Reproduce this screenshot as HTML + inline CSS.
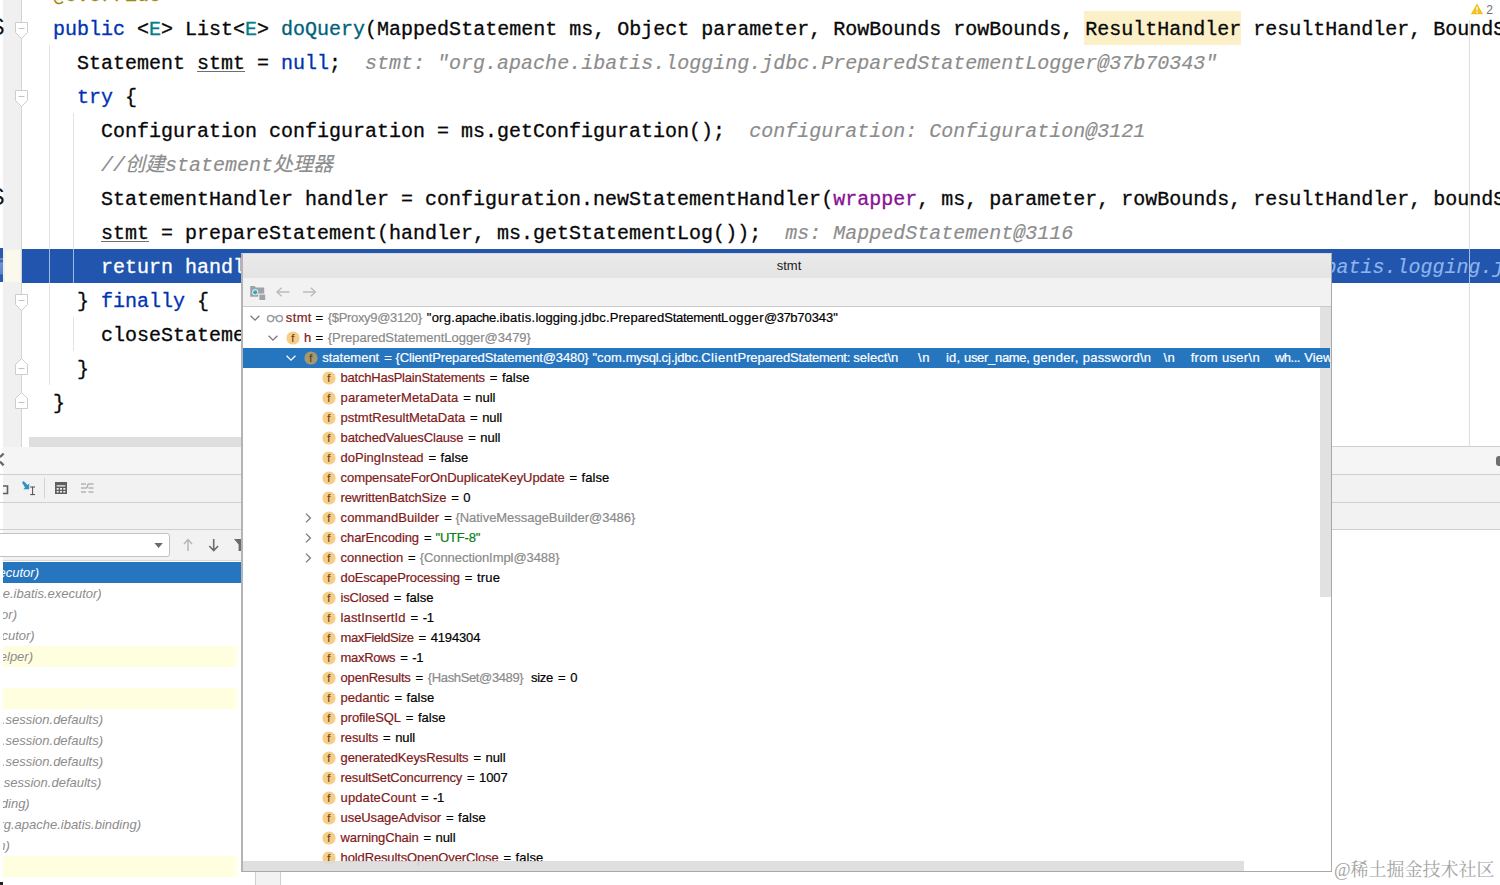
<!DOCTYPE html>
<html lang="zh"><head><meta charset="utf-8"><title>stmt</title>
<style>
html,body{margin:0;padding:0;background:#fff;width:1500px;height:885px}
#root{position:relative;width:1500px;height:885px;overflow:hidden;background:#fff;font-family:"Liberation Sans","Noto Sans CJK SC",sans-serif;font-size:13px;color:#000}
#root div,#root span,#root svg{box-sizing:border-box}
.abs{position:absolute}
/* ---------- editor ---------- */
#editor{position:absolute;left:0;top:0;width:1500px;height:447px;overflow:hidden;background:#fff}
#gutter{position:absolute;left:3px;top:0;width:18px;height:447px;background:#f0f0f0}
#gline{position:absolute;left:21px;top:0;width:1px;height:447px;background:#d4d4d4}
#margin{position:absolute;left:1469px;top:20px;width:1px;height:427px;background:#dedede}
.guide{position:absolute;width:1px;background:#e3e3e3}
#exec{position:absolute;left:22px;top:249px;width:1478px;height:34px;background:#2255ad}
#exec0{position:absolute;left:0;top:248px;width:3px;height:34px;background:linear-gradient(#2a59ae 0,#2a59ae 28%,#7f9fd8 32%,#2a59ae 38%,#6f93d3 45%,#5d84cb 75%,#2a59ae 80%)}
#gexec{position:absolute;left:5px;top:250px;width:15px;height:32px;background:#fbf9ec}
.ln{position:absolute;left:53px;height:34px;line-height:34px;white-space:pre;font-family:"Liberation Mono","Noto Sans CJK SC",monospace;font-size:20px;color:#080808;letter-spacing:0;-webkit-text-stroke:0.3px currentColor}
.kw{color:#0033b3}.tp{color:#007e8a}.md{color:#00627a}.fld{color:#871094}.an{color:#9e880d}
.cm{color:#8c8c8c;font-style:italic;-webkit-text-stroke:0.15px currentColor}
.hint{color:#8c8c8c;font-style:italic;-webkit-text-stroke:0.15px currentColor}
.u{text-decoration:underline;text-decoration-thickness:1px;text-underline-offset:2px;text-decoration-color:#6e6e6e}
.warn{background:#fbf0c8;display:inline-block;height:34px;vertical-align:top}
#hscroll{position:absolute;left:29px;top:437px;width:1290px;height:10px;background:#dedede}
/* ---------- popup ---------- */
#popup{position:absolute;left:241px;top:253px;width:1091px;height:619px;background:#fff;border:1px solid #a8a8a8;border-top-color:#d9d9d9;border-left:2px solid #b4b4b4;overflow:hidden}
#ptitle{position:absolute;left:0;top:0;width:100%;height:24px;background:linear-gradient(#eaeaea,#e4e4e4);text-align:center;line-height:24px;font-size:13px;color:#1a1a1a;padding-left:4px}
#ptool{position:absolute;left:0;top:24px;width:100%;height:29px;background:#f2f2f2;border-bottom:1px solid #cbcbcb}
.row{position:absolute;left:0;width:1087px;height:20px;line-height:20px;white-space:pre;font-size:13px}
.sel{background:#2675bf;overflow:hidden}
.seg{position:absolute;top:0;height:20px;line-height:20px;white-space:pre;-webkit-text-stroke:0.2px currentColor}
.n{color:#7f1a1a}.t{color:#8a8a8a}.s{color:#0a7d17}.v{color:#000}
.sel .seg{color:#fff}
.ic{position:absolute;overflow:visible}
#vscroll{position:absolute;left:1077px;top:53px;width:11px;height:290px;background:#e1e1e1}
#hs2{position:absolute;left:0;top:607px;width:1001px;height:11px;background:rgba(220,220,220,.9)}
/* ---------- bottom panels ---------- */
.strip{position:absolute;background:#f3f3f3}
.hl{position:absolute;height:1px;background:#cfcfcf}
#frames{position:absolute;left:3px;top:561px;width:238px;height:324px;background:#fff;overflow:hidden}
.fr{position:absolute;left:0;width:238px;height:21px}
.fr span{position:absolute;top:0;height:21px;line-height:21px;white-space:pre;font-style:italic;font-size:13px;color:#8c8c8c}
.fy{background:linear-gradient(90deg,#ffffe0 0,#ffffe0 230px,#fff 238px)}
.fs{background:#2675bf}
.fs span{color:#fff}
#combo{position:absolute;left:-6px;top:533px;width:176px;height:24px;background:#fff;border:1px solid #c2c2c2;border-radius:3px}
#wm{position:absolute;left:1334px;top:856.5px;height:26px;line-height:26px;font-size:18px;color:#a4a4a4;white-space:pre;font-family:"Liberation Serif","Noto Serif CJK SC",serif;font-weight:400}
</style></head>
<body><div id="root">
<div id="editor">
<div id="gutter"></div><div id="gline"></div>
<div id="exec"></div><div id="exec0"></div><div id="gexec"></div>
<div class="guide" style="left:49px;top:45px;height:340px"></div>
<div class="guide" style="left:73px;top:113px;height:170px"></div>
<div class="guide" style="left:73px;top:317px;height:34px"></div>
<div class="guide" style="left:49px;top:249px;height:34px;background:#9db8e6"></div>
<div class="guide" style="left:73px;top:249px;height:34px;background:#9db8e6"></div>
<div id="margin"></div>
<div class="guide" style="left:1469px;top:249px;height:34px;background:#a9c0e8"></div>
<div class="ln" style="left:53px;top:-21px;"><span class="an">@Override</span></div>
<div class="ln" style="left:53px;top:13px;"><span class="kw">public</span> &lt;<span class="tp">E</span>&gt; List&lt;<span class="tp">E</span>&gt; <span class="md">doQuery</span>(MappedStatement ms, Object parameter, RowBounds rowBounds, <span class="warn" style="margin-top:-2px;padding-top:2px;margin-left:-1px;padding-left:1px">ResultHandler</span> resultHandler, BoundSql boundSql) <span class="kw">throws</span> SQLException {</div>
<div class="ln" style="left:53px;top:47px;">  Statement <span class="u">stmt</span> = <span class="kw">null</span>;  <span class="hint">stmt: "org.apache.ibatis.logging.jdbc.PreparedStatementLogger@37b70343"</span></div>
<div class="ln" style="left:53px;top:81px;">  <span class="kw">try</span> {</div>
<div class="ln" style="left:53px;top:115px;">    Configuration configuration = ms.getConfiguration();  <span class="hint">configuration: Configuration@3121</span></div>
<div class="ln" style="left:53px;top:149px;">    <span class="cm">//创建statement处理器</span></div>
<div class="ln" style="left:53px;top:183px;">    StatementHandler handler = configuration.newStatementHandler(<span class="fld">wrapper</span>, ms, parameter, rowBounds, resultHandler, boundSql);</div>
<div class="ln" style="left:53px;top:217px;">    <span class="u">stmt</span> = prepareStatement(handler, ms.getStatementLog());  <span class="hint">ms: MappedStatement@3116</span></div>
<div class="ln" style="left:53px;top:251px;color:#fff">    return handler.query(stmt, resultHandler);</div>
<div class="ln" style="left:1096.5px;top:251px;"><span class="hint" style="color:#8db4ee">stmt: "org.apache.ibatis.logging.jdbc.PreparedStatementLogger@37b70343"</span></div>
<div class="ln" style="left:53px;top:285px;">  } <span class="kw">finally</span> {</div>
<div class="ln" style="left:53px;top:319px;">    closeStatement(<span class="u">stmt</span>);</div>
<div class="ln" style="left:53px;top:353px;">  }</div>
<div class="ln" style="left:53px;top:387px;">}</div>
<svg class="ic" style="left:15px;top:21.9px" width="13" height="17" viewBox="0 0 13 17"><path d="M0.5,0.5 H12.5 V10.5 L6.5,16.5 L0.5,10.5 Z" fill="#fff" stroke="#cdcdcd" stroke-width="1"/><path d="M3.5,6.5 H9.5" stroke="#c2c2c2" stroke-width="1" fill="none"/></svg>
<svg class="ic" style="left:15px;top:89.9px" width="13" height="17" viewBox="0 0 13 17"><path d="M0.5,0.5 H12.5 V10.5 L6.5,16.5 L0.5,10.5 Z" fill="#fff" stroke="#cdcdcd" stroke-width="1"/><path d="M3.5,6.5 H9.5" stroke="#c2c2c2" stroke-width="1" fill="none"/></svg>
<svg class="ic" style="left:15px;top:293.9px" width="13" height="17" viewBox="0 0 13 17"><path d="M0.5,0.5 H12.5 V10.5 L6.5,16.5 L0.5,10.5 Z" fill="#fff" stroke="#cdcdcd" stroke-width="1"/><path d="M3.5,6.5 H9.5" stroke="#c2c2c2" stroke-width="1" fill="none"/></svg>
<svg class="ic" style="left:15px;top:358.3px" width="13" height="17" viewBox="0 0 13 17"><path d="M0.5,16.5 H12.5 V6.5 L6.5,0.5 L0.5,6.5 Z" fill="#fff" stroke="#cdcdcd" stroke-width="1"/><path d="M3.5,10.5 H9.5" stroke="#c2c2c2" stroke-width="1" fill="none"/></svg>
<svg class="ic" style="left:15px;top:392.1px" width="13" height="17" viewBox="0 0 13 17"><path d="M0.5,16.5 H12.5 V6.5 L6.5,0.5 L0.5,6.5 Z" fill="#fff" stroke="#cdcdcd" stroke-width="1"/><path d="M3.5,10.5 H9.5" stroke="#c2c2c2" stroke-width="1" fill="none"/></svg>
<svg class="ic" style="left:1470px;top:3px" width="14" height="12" viewBox="0 0 14 12"><path d="M7,0.6 L13.2,11.2 H0.8 Z" fill="#f2c21c"/><path d="M6.3,4 h1.4 v3.6 h-1.4 z M6.3,8.6 h1.4 v1.4 h-1.4 z" fill="#fff"/></svg>
<div class="abs" style="left:1486.3px;top:2px;height:16px;line-height:16px;font-size:12px;color:#6e6e6e">2</div>
<div id="hscroll"></div>
<div class="abs" style="left:-10.8px;top:10px;height:34px;line-height:34px;font-size:23px;font-family:'Liberation Sans',sans-serif;color:#111;white-space:pre">S</div>
<div class="abs" style="left:-10.8px;top:180px;height:34px;line-height:34px;font-size:23px;font-family:'Liberation Sans',sans-serif;color:#111;white-space:pre">S</div>
</div>
<div class="strip" style="left:3px;top:447px;width:1497px;height:27px;background:#f5f5f5"></div>
<div class="strip" style="left:3px;top:474px;width:1497px;height:56px;background:#f2f2f2"></div>
<div class="strip" style="left:3px;top:530px;width:240px;height:31px;background:#f2f2f2"></div>
<div class="hl" style="left:1332px;top:446px;width:168px"></div>
<div class="hl" style="left:0;top:474px;width:1500px"></div>
<div class="hl" style="left:0;top:502px;width:1500px"></div>
<div class="hl" style="left:0;top:529px;width:1500px"></div>
<div class="hl" style="left:3px;top:560px;width:240px;background:#dadada"></div>
<svg class="ic" style="left:0;top:452px" width="4" height="16" viewBox="0 0 4 16"><path d="M3.6,1.5 L0,5.2 M0,9.6 L3.6,13.4" fill="none" stroke="#6a6a6a" stroke-width="2.4"/></svg>
<svg class="ic" style="left:0;top:478px" width="100" height="22" viewBox="0 0 100 22"><path d="M3,8 H7.5 V15.5 H3" fill="none" stroke="#5f5f5f" stroke-width="1.6"/><path d="M22,4.5 L23.6,3 L27.6,7 L29.2,5.4 V11.2 H23.4 L25,9.6 Z" fill="#3592c4"/><path d="M30.2,9 H35 M30.2,16.6 H35 M32.6,9 V16.6" fill="none" stroke="#4d4d4d" stroke-width="1"/><path d="M44.5,0 V20" stroke="#d3d3d3" stroke-width="1"/><path d="M55,4 H67 V16 H55 Z M56.7,7.3 V8.6 H65.3 V7.3 Z M56.7,10 v1.7 h2 v-1.7 z M60,10 v1.7 h2 v-1.7 z M63.3,10 v1.7 h2 v-1.7 z M56.7,12.9 v1.7 h2 v-1.7 z M60,12.9 v1.7 h2 v-1.7 z M63.3,12.9 v1.7 h2 v-1.7 z" fill="#5f5f5f" fill-rule="evenodd"/><path d="M81,6 H86 M81,10 H86 M81,14 H86 M88.5,6 H93.5 M88.5,10 H93.5 M88.5,14 H93.5 M86,10 Q87.5,10 87.5,8 Q87.5,6 88.5,6" fill="none" stroke="#b4b4b4" stroke-width="1.5"/></svg>
<div id="combo"></div>
<svg class="ic" style="left:150px;top:536px" width="92" height="18" viewBox="0 0 92 18"><path d="M4.4,7 H12.8 L8.6,12 Z" fill="#6b6b6b"/><path d="M38,15 V4 M34,8 L38,3.6 L42,8" fill="none" stroke="#b6b6b6" stroke-width="1.5"/><path d="M63.7,3 V14.4 M59.3,10 L63.7,14.6 L68.1,10" fill="none" stroke="#6b6b6b" stroke-width="1.6"/><path d="M84,3 H92 V15 H88.6 V8.4 Z" fill="#6b6b6b"/></svg>
<div class="abs" style="left:1496px;top:456px;width:8px;height:10px;border-radius:3px;background:#6e6e6e"></div>
<div id="frames">
<div class="fr fs" style="top:0.5px"><span style="right:202.0px">xecutor)</span></div>
<div class="fr" style="top:21.5px"><span style="right:139.3px">he.ibatis.executor)</span></div>
<div class="fr" style="top:42.5px"><span style="right:224.0px">tor)</span></div>
<div class="fr" style="top:63.5px"><span style="right:206.3px">ecutor)</span></div>
<div class="fr fy" style="top:84.5px"><span style="right:208.0px">Helper)</span></div>
<div class="fr fy" style="top:126.5px"></div>
<div class="fr" style="top:147.5px"><span style="right:138.0px">s.session.defaults)</span></div>
<div class="fr" style="top:168.5px"><span style="right:138.0px">s.session.defaults)</span></div>
<div class="fr" style="top:189.5px"><span style="right:138.0px">s.session.defaults)</span></div>
<div class="fr" style="top:210.5px"><span style="right:139.7px">s.session.defaults)</span></div>
<div class="fr" style="top:231.5px"><span style="right:211.3px">nding)</span></div>
<div class="fr" style="top:252.5px"><span style="right:100.0px">rg.apache.ibatis.binding)</span></div>
<div class="fr" style="top:273.5px"><span style="right:231.2px">in)</span></div>
<div class="fr fy" style="top:294.5px"></div>
</div>
<div class="abs" style="left:0;top:882px;width:3px;height:3px;background:#222"></div>
<div class="abs" style="left:255px;top:872px;width:26px;height:14px;background:#f2f2f2;border-left:1px solid #cfcfcf;border-right:1px solid #cfcfcf"></div>
<div id="popup">
<div id="ptitle">stmt</div>
<div id="ptool"><svg class="ic" style="left:7px;top:7px" width="70" height="16" viewBox="0 0 70 16"><path d="M0.2,1 H4.6 L6,2.6 H14.2 V11.8 H0.2 Z" fill="#9ea3a8"/><circle cx="5.2" cy="7.3" r="3" fill="#e9f6f8"/><circle cx="5.2" cy="7.3" r="2.1" fill="#2fa9c0"/><rect x="8.2" y="8.6" width="7.4" height="7" fill="#f2f2f2"/><rect x="9.4" y="9.6" width="5.8" height="5.4" fill="#9ea3a8"/><path d="M39.4,7 H27.4 M31.6,2.8 L27,7 L31.6,11.2" fill="none" stroke="#bcbcbc" stroke-width="1.4"/><path d="M53,7 H65 M60.8,2.8 L65.4,7 L60.8,11.2" fill="none" stroke="#bcbcbc" stroke-width="1.4"/></svg></div>
<div id="vscroll"></div>
<div class="row" style="top:54px"><span class="seg n" style="left:42.8px;letter-spacing:0.359px;">stmt</span><span class="seg v" style="left:72.5px;">=</span><span class="seg t" style="left:84.8px;letter-spacing:-0.329px;">{$Proxy9@3120}</span><span class="seg v" style="left:183.8px;letter-spacing:0.237px;">"org.</span><span class="seg v" style="left:212.0px;letter-spacing:-0.267px;">apache.</span><span class="seg v" style="left:256.4px;letter-spacing:0.290px;">ibatis.</span><span class="seg v" style="left:292.4px;letter-spacing:0.019px;">logging.</span><span class="seg v" style="left:338.1px;letter-spacing:0.246px;">jdbc.</span><span class="seg v" style="left:366.8px;letter-spacing:0.127px;">Prepared</span><span class="seg v" style="left:421.3px;letter-spacing:-0.285px;">Statement</span><span class="seg v" style="left:478.0px;letter-spacing:0.419px;">Logger</span><span class="seg v" style="left:521.0px;letter-spacing:-0.491px;">@37</span><span class="seg v" style="left:547.2px;letter-spacing:-0.071px;">b70343"</span></div>
<div class="row" style="top:74px"><span class="seg n" style="left:61.0px;">h</span><span class="seg v" style="left:72.5px;">=</span><span class="seg t" style="left:84.8px;letter-spacing:-0.031px;">{PreparedStatementLogger@3479}</span></div>
<div class="row sel" style="top:94px"><span class="seg n" style="left:79.3px;letter-spacing:-0.022px;">statement</span><span class="seg v" style="left:141.3px;">=</span><span class="seg t" style="left:152.5px;letter-spacing:-0.126px;">{ClientPreparedStatement@3480}</span><span class="seg v" style="left:349.4px;letter-spacing:0.101px;">"com.</span><span class="seg v" style="left:382.7px;letter-spacing:-0.277px;">mysql.</span><span class="seg v" style="left:418.6px;letter-spacing:-0.033px;">cj.</span><span class="seg v" style="left:431.5px;letter-spacing:-0.154px;">jdbc.</span><span class="seg v" style="left:458.2px;letter-spacing:0.525px;">Client</span><span class="seg v" style="left:494.6px;letter-spacing:-0.123px;">Prepared</span><span class="seg v" style="left:547.1px;letter-spacing:-0.299px;">Statement: </span><span class="seg v" style="left:610.3px;letter-spacing:0.023px;">select\n</span><span class="seg v" style="left:675.0px;letter-spacing:0.578px;">\n</span><span class="seg v" style="left:703.1px;letter-spacing:0.139px;">id, </span><span class="seg v" style="left:721.0px;letter-spacing:-0.306px;">user_name, </span><span class="seg v" style="left:789.9px;letter-spacing:0.362px;">gender, </span><span class="seg v" style="left:839.8px;letter-spacing:0.202px;">password\n</span><span class="seg v" style="left:920.5px;letter-spacing:0.478px;">\n</span><span class="seg v" style="left:947.7px;letter-spacing:0.323px;">from user\n</span><span class="seg v" style="left:1032.0px;letter-spacing:-0.534px;">wh...</span><span class="seg v" style="left:1061.3px;letter-spacing:0.062px;">View</span></div>
<div class="row" style="top:114px"><span class="seg n" style="left:97.6px;letter-spacing:-0.230px;">batchHasPlainStatements</span><span class="seg v" style="left:246.8px;">=</span><span class="seg v" style="left:258.9px;letter-spacing:0.026px;">false</span></div>
<div class="row" style="top:134px"><span class="seg n" style="left:97.6px;letter-spacing:0.122px;">parameterMetaData</span><span class="seg v" style="left:220.2px;">=</span><span class="seg v" style="left:232.3px;letter-spacing:-0.062px;">null</span></div>
<div class="row" style="top:154px"><span class="seg n" style="left:97.6px;letter-spacing:-0.021px;">pstmtResultMetaData</span><span class="seg v" style="left:227.1px;">=</span><span class="seg v" style="left:239.2px;letter-spacing:-0.062px;">null</span></div>
<div class="row" style="top:174px"><span class="seg n" style="left:97.6px;letter-spacing:-0.148px;">batchedValuesClause</span><span class="seg v" style="left:225.2px;">=</span><span class="seg v" style="left:237.3px;letter-spacing:-0.062px;">null</span></div>
<div class="row" style="top:194px"><span class="seg n" style="left:97.6px;letter-spacing:-0.010px;">doPingInstead</span><span class="seg v" style="left:185.5px;">=</span><span class="seg v" style="left:197.6px;letter-spacing:0.026px;">false</span></div>
<div class="row" style="top:214px"><span class="seg n" style="left:97.6px;letter-spacing:-0.066px;">compensateForOnDuplicateKeyUpdate</span><span class="seg v" style="left:326.5px;">=</span><span class="seg v" style="left:338.6px;letter-spacing:0.026px;">false</span></div>
<div class="row" style="top:234px"><span class="seg n" style="left:97.6px;letter-spacing:-0.149px;">rewrittenBatchSize</span><span class="seg v" style="left:208.2px;">=</span><span class="seg v" style="left:220.3px;letter-spacing:0.066px;">0</span></div>
<div class="row" style="top:254px"><span class="seg n" style="left:97.6px;letter-spacing:0.082px;">commandBuilder</span><span class="seg v" style="left:201.2px;">=</span><span class="seg t" style="left:212.4px;letter-spacing:-0.036px;">{NativeMessageBuilder@3486}</span></div>
<div class="row" style="top:274px"><span class="seg n" style="left:97.6px;letter-spacing:-0.092px;">charEncoding</span><span class="seg v" style="left:180.9px;">=</span><span class="seg s" style="left:192.5px;letter-spacing:-0.195px;">"UTF-8"</span></div>
<div class="row" style="top:294px"><span class="seg n" style="left:97.6px;letter-spacing:-0.029px;">connection</span><span class="seg v" style="left:165.1px;">=</span><span class="seg t" style="left:176.7px;letter-spacing:-0.064px;">{ConnectionImpl@3488}</span></div>
<div class="row" style="top:314px"><span class="seg n" style="left:97.6px;letter-spacing:-0.158px;">doEscapeProcessing</span><span class="seg v" style="left:221.8px;">=</span><span class="seg v" style="left:233.9px;letter-spacing:0.198px;">true</span></div>
<div class="row" style="top:334px"><span class="seg n" style="left:97.6px;letter-spacing:-0.195px;">isClosed</span><span class="seg v" style="left:150.8px;">=</span><span class="seg v" style="left:162.9px;letter-spacing:0.026px;">false</span></div>
<div class="row" style="top:354px"><span class="seg n" style="left:97.6px;letter-spacing:0.126px;">lastInsertId</span><span class="seg v" style="left:167.6px;">=</span><span class="seg v" style="left:179.7px;letter-spacing:-0.381px;">-1</span></div>
<div class="row" style="top:374px"><span class="seg n" style="left:97.6px;letter-spacing:-0.411px;">maxFieldSize</span><span class="seg v" style="left:175.6px;">=</span><span class="seg v" style="left:187.7px;letter-spacing:-0.146px;">4194304</span></div>
<div class="row" style="top:394px"><span class="seg n" style="left:97.6px;letter-spacing:-0.340px;">maxRows</span><span class="seg v" style="left:157.2px;">=</span><span class="seg v" style="left:169.3px;letter-spacing:-0.381px;">-1</span></div>
<div class="row" style="top:414px"><span class="seg n" style="left:97.6px;letter-spacing:-0.207px;">openResults</span><span class="seg v" style="left:172.5px;">=</span><span class="seg t" style="left:184.8px;letter-spacing:-0.369px;">{HashSet@3489}</span><span class="seg v" style="left:288.0px;letter-spacing:-0.281px;">size</span><span class="seg v" style="left:314.9px;">=</span><span class="seg v" style="left:327.2px;letter-spacing:0.066px;">0</span></div>
<div class="row" style="top:434px"><span class="seg n" style="left:97.6px;letter-spacing:-0.020px;">pedantic</span><span class="seg v" style="left:151.5px;">=</span><span class="seg v" style="left:163.6px;letter-spacing:0.026px;">false</span></div>
<div class="row" style="top:454px"><span class="seg n" style="left:97.6px;letter-spacing:-0.112px;">profileSQL</span><span class="seg v" style="left:162.8px;">=</span><span class="seg v" style="left:174.9px;letter-spacing:0.026px;">false</span></div>
<div class="row" style="top:474px"><span class="seg n" style="left:97.6px;letter-spacing:-0.100px;">results</span><span class="seg v" style="left:140.1px;">=</span><span class="seg v" style="left:152.2px;letter-spacing:-0.062px;">null</span></div>
<div class="row" style="top:494px"><span class="seg n" style="left:97.6px;letter-spacing:-0.146px;">generatedKeysResults</span><span class="seg v" style="left:230.4px;">=</span><span class="seg v" style="left:242.5px;letter-spacing:-0.062px;">null</span></div>
<div class="row" style="top:514px"><span class="seg n" style="left:97.6px;letter-spacing:-0.175px;">resultSetConcurrency</span><span class="seg v" style="left:224.0px;">=</span><span class="seg v" style="left:236.1px;letter-spacing:-0.130px;">1007</span></div>
<div class="row" style="top:534px"><span class="seg n" style="left:97.6px;letter-spacing:0.095px;">updateCount</span><span class="seg v" style="left:178.0px;">=</span><span class="seg v" style="left:190.1px;letter-spacing:-0.381px;">-1</span></div>
<div class="row" style="top:554px"><span class="seg n" style="left:97.6px;letter-spacing:-0.093px;">useUsageAdvisor</span><span class="seg v" style="left:203.0px;">=</span><span class="seg v" style="left:215.1px;letter-spacing:0.026px;">false</span></div>
<div class="row" style="top:574px"><span class="seg n" style="left:97.6px;letter-spacing:-0.133px;">warningChain</span><span class="seg v" style="left:180.4px;">=</span><span class="seg v" style="left:192.5px;letter-spacing:-0.062px;">null</span></div>
<div class="row" style="top:594px"><span class="seg n" style="left:97.6px;letter-spacing:-0.131px;">holdResultsOpenOverClose</span><span class="seg v" style="left:260.5px;">=</span><span class="seg v" style="left:272.6px;letter-spacing:0.026px;">false</span></div>
<svg class="ic" style="left:5.5px;top:59.0px" width="12" height="10" viewBox="0 0 12 10"><path d="M1.6,2.8 L6,7.2 L10.4,2.8" fill="none" stroke="#7a7a7a" stroke-width="1.3"/></svg>
<svg class="ic" style="left:23.0px;top:58.6px" width="18" height="10" viewBox="0 0 18 10"><circle cx="4.6" cy="5.6" r="3.1" fill="none" stroke="#9aa0a6" stroke-width="1.5"/><circle cx="13.4" cy="5.6" r="3.1" fill="none" stroke="#9aa0a6" stroke-width="1.5"/><path d="M7.4,4.6 Q9,3.4 10.6,4.6" fill="none" stroke="#9aa0a6" stroke-width="1.3"/></svg>
<svg class="ic" style="left:23.5px;top:79.0px" width="12" height="10" viewBox="0 0 12 10"><path d="M1.6,2.8 L6,7.2 L10.4,2.8" fill="none" stroke="#7a7a7a" stroke-width="1.3"/></svg>
<svg class="ic" style="left:42.8px;top:77.0px" width="14" height="14" viewBox="0 0 14 14"><circle cx="7" cy="7" r="6.6" fill="#f4af3d" fill-opacity=".62"/><text x="5.65" y="11.3" text-anchor="middle" transform="scale(1.22,1)" font-family="Liberation Sans, sans-serif" font-size="10.5" fill="#4a3508" fill-opacity=".9">f</text></svg>
<svg class="ic" style="left:41.5px;top:99.0px" width="12" height="10" viewBox="0 0 12 10"><path d="M1.6,2.8 L6,7.2 L10.4,2.8" fill="none" stroke="#fff" stroke-width="1.3"/></svg>
<svg class="ic" style="left:60.8px;top:97.0px" width="14" height="14" viewBox="0 0 14 14"><circle cx="7" cy="7" r="6.6" fill="#f4af3d" fill-opacity=".62"/><text x="5.65" y="11.3" text-anchor="middle" transform="scale(1.22,1)" font-family="Liberation Sans, sans-serif" font-size="10.5" fill="#4a3508" fill-opacity=".9">f</text></svg>
<svg class="ic" style="left:79.2px;top:117.0px" width="14" height="14" viewBox="0 0 14 14"><circle cx="7" cy="7" r="6.6" fill="#f4af3d" fill-opacity=".62"/><text x="5.65" y="11.3" text-anchor="middle" transform="scale(1.22,1)" font-family="Liberation Sans, sans-serif" font-size="10.5" fill="#4a3508" fill-opacity=".9">f</text></svg>
<svg class="ic" style="left:79.2px;top:137.0px" width="14" height="14" viewBox="0 0 14 14"><circle cx="7" cy="7" r="6.6" fill="#f4af3d" fill-opacity=".62"/><text x="5.65" y="11.3" text-anchor="middle" transform="scale(1.22,1)" font-family="Liberation Sans, sans-serif" font-size="10.5" fill="#4a3508" fill-opacity=".9">f</text></svg>
<svg class="ic" style="left:79.2px;top:157.0px" width="14" height="14" viewBox="0 0 14 14"><circle cx="7" cy="7" r="6.6" fill="#f4af3d" fill-opacity=".62"/><text x="5.65" y="11.3" text-anchor="middle" transform="scale(1.22,1)" font-family="Liberation Sans, sans-serif" font-size="10.5" fill="#4a3508" fill-opacity=".9">f</text></svg>
<svg class="ic" style="left:79.2px;top:177.0px" width="14" height="14" viewBox="0 0 14 14"><circle cx="7" cy="7" r="6.6" fill="#f4af3d" fill-opacity=".62"/><text x="5.65" y="11.3" text-anchor="middle" transform="scale(1.22,1)" font-family="Liberation Sans, sans-serif" font-size="10.5" fill="#4a3508" fill-opacity=".9">f</text></svg>
<svg class="ic" style="left:79.2px;top:197.0px" width="14" height="14" viewBox="0 0 14 14"><circle cx="7" cy="7" r="6.6" fill="#f4af3d" fill-opacity=".62"/><text x="5.65" y="11.3" text-anchor="middle" transform="scale(1.22,1)" font-family="Liberation Sans, sans-serif" font-size="10.5" fill="#4a3508" fill-opacity=".9">f</text></svg>
<svg class="ic" style="left:79.2px;top:217.0px" width="14" height="14" viewBox="0 0 14 14"><circle cx="7" cy="7" r="6.6" fill="#f4af3d" fill-opacity=".62"/><text x="5.65" y="11.3" text-anchor="middle" transform="scale(1.22,1)" font-family="Liberation Sans, sans-serif" font-size="10.5" fill="#4a3508" fill-opacity=".9">f</text></svg>
<svg class="ic" style="left:79.2px;top:237.0px" width="14" height="14" viewBox="0 0 14 14"><circle cx="7" cy="7" r="6.6" fill="#f4af3d" fill-opacity=".62"/><text x="5.65" y="11.3" text-anchor="middle" transform="scale(1.22,1)" font-family="Liberation Sans, sans-serif" font-size="10.5" fill="#4a3508" fill-opacity=".9">f</text></svg>
<svg class="ic" style="left:79.2px;top:257.0px" width="14" height="14" viewBox="0 0 14 14"><circle cx="7" cy="7" r="6.6" fill="#f4af3d" fill-opacity=".62"/><text x="5.65" y="11.3" text-anchor="middle" transform="scale(1.22,1)" font-family="Liberation Sans, sans-serif" font-size="10.5" fill="#4a3508" fill-opacity=".9">f</text></svg>
<svg class="ic" style="left:79.2px;top:277.0px" width="14" height="14" viewBox="0 0 14 14"><circle cx="7" cy="7" r="6.6" fill="#f4af3d" fill-opacity=".62"/><text x="5.65" y="11.3" text-anchor="middle" transform="scale(1.22,1)" font-family="Liberation Sans, sans-serif" font-size="10.5" fill="#4a3508" fill-opacity=".9">f</text></svg>
<svg class="ic" style="left:79.2px;top:297.0px" width="14" height="14" viewBox="0 0 14 14"><circle cx="7" cy="7" r="6.6" fill="#f4af3d" fill-opacity=".62"/><text x="5.65" y="11.3" text-anchor="middle" transform="scale(1.22,1)" font-family="Liberation Sans, sans-serif" font-size="10.5" fill="#4a3508" fill-opacity=".9">f</text></svg>
<svg class="ic" style="left:79.2px;top:317.0px" width="14" height="14" viewBox="0 0 14 14"><circle cx="7" cy="7" r="6.6" fill="#f4af3d" fill-opacity=".62"/><text x="5.65" y="11.3" text-anchor="middle" transform="scale(1.22,1)" font-family="Liberation Sans, sans-serif" font-size="10.5" fill="#4a3508" fill-opacity=".9">f</text></svg>
<svg class="ic" style="left:79.2px;top:337.0px" width="14" height="14" viewBox="0 0 14 14"><circle cx="7" cy="7" r="6.6" fill="#f4af3d" fill-opacity=".62"/><text x="5.65" y="11.3" text-anchor="middle" transform="scale(1.22,1)" font-family="Liberation Sans, sans-serif" font-size="10.5" fill="#4a3508" fill-opacity=".9">f</text></svg>
<svg class="ic" style="left:79.2px;top:357.0px" width="14" height="14" viewBox="0 0 14 14"><circle cx="7" cy="7" r="6.6" fill="#f4af3d" fill-opacity=".62"/><text x="5.65" y="11.3" text-anchor="middle" transform="scale(1.22,1)" font-family="Liberation Sans, sans-serif" font-size="10.5" fill="#4a3508" fill-opacity=".9">f</text></svg>
<svg class="ic" style="left:79.2px;top:377.0px" width="14" height="14" viewBox="0 0 14 14"><circle cx="7" cy="7" r="6.6" fill="#f4af3d" fill-opacity=".62"/><text x="5.65" y="11.3" text-anchor="middle" transform="scale(1.22,1)" font-family="Liberation Sans, sans-serif" font-size="10.5" fill="#4a3508" fill-opacity=".9">f</text></svg>
<svg class="ic" style="left:79.2px;top:397.0px" width="14" height="14" viewBox="0 0 14 14"><circle cx="7" cy="7" r="6.6" fill="#f4af3d" fill-opacity=".62"/><text x="5.65" y="11.3" text-anchor="middle" transform="scale(1.22,1)" font-family="Liberation Sans, sans-serif" font-size="10.5" fill="#4a3508" fill-opacity=".9">f</text></svg>
<svg class="ic" style="left:79.2px;top:417.0px" width="14" height="14" viewBox="0 0 14 14"><circle cx="7" cy="7" r="6.6" fill="#f4af3d" fill-opacity=".62"/><text x="5.65" y="11.3" text-anchor="middle" transform="scale(1.22,1)" font-family="Liberation Sans, sans-serif" font-size="10.5" fill="#4a3508" fill-opacity=".9">f</text></svg>
<svg class="ic" style="left:79.2px;top:437.0px" width="14" height="14" viewBox="0 0 14 14"><circle cx="7" cy="7" r="6.6" fill="#f4af3d" fill-opacity=".62"/><text x="5.65" y="11.3" text-anchor="middle" transform="scale(1.22,1)" font-family="Liberation Sans, sans-serif" font-size="10.5" fill="#4a3508" fill-opacity=".9">f</text></svg>
<svg class="ic" style="left:79.2px;top:457.0px" width="14" height="14" viewBox="0 0 14 14"><circle cx="7" cy="7" r="6.6" fill="#f4af3d" fill-opacity=".62"/><text x="5.65" y="11.3" text-anchor="middle" transform="scale(1.22,1)" font-family="Liberation Sans, sans-serif" font-size="10.5" fill="#4a3508" fill-opacity=".9">f</text></svg>
<svg class="ic" style="left:79.2px;top:477.0px" width="14" height="14" viewBox="0 0 14 14"><circle cx="7" cy="7" r="6.6" fill="#f4af3d" fill-opacity=".62"/><text x="5.65" y="11.3" text-anchor="middle" transform="scale(1.22,1)" font-family="Liberation Sans, sans-serif" font-size="10.5" fill="#4a3508" fill-opacity=".9">f</text></svg>
<svg class="ic" style="left:79.2px;top:497.0px" width="14" height="14" viewBox="0 0 14 14"><circle cx="7" cy="7" r="6.6" fill="#f4af3d" fill-opacity=".62"/><text x="5.65" y="11.3" text-anchor="middle" transform="scale(1.22,1)" font-family="Liberation Sans, sans-serif" font-size="10.5" fill="#4a3508" fill-opacity=".9">f</text></svg>
<svg class="ic" style="left:79.2px;top:517.0px" width="14" height="14" viewBox="0 0 14 14"><circle cx="7" cy="7" r="6.6" fill="#f4af3d" fill-opacity=".62"/><text x="5.65" y="11.3" text-anchor="middle" transform="scale(1.22,1)" font-family="Liberation Sans, sans-serif" font-size="10.5" fill="#4a3508" fill-opacity=".9">f</text></svg>
<svg class="ic" style="left:79.2px;top:537.0px" width="14" height="14" viewBox="0 0 14 14"><circle cx="7" cy="7" r="6.6" fill="#f4af3d" fill-opacity=".62"/><text x="5.65" y="11.3" text-anchor="middle" transform="scale(1.22,1)" font-family="Liberation Sans, sans-serif" font-size="10.5" fill="#4a3508" fill-opacity=".9">f</text></svg>
<svg class="ic" style="left:79.2px;top:557.0px" width="14" height="14" viewBox="0 0 14 14"><circle cx="7" cy="7" r="6.6" fill="#f4af3d" fill-opacity=".62"/><text x="5.65" y="11.3" text-anchor="middle" transform="scale(1.22,1)" font-family="Liberation Sans, sans-serif" font-size="10.5" fill="#4a3508" fill-opacity=".9">f</text></svg>
<svg class="ic" style="left:79.2px;top:577.0px" width="14" height="14" viewBox="0 0 14 14"><circle cx="7" cy="7" r="6.6" fill="#f4af3d" fill-opacity=".62"/><text x="5.65" y="11.3" text-anchor="middle" transform="scale(1.22,1)" font-family="Liberation Sans, sans-serif" font-size="10.5" fill="#4a3508" fill-opacity=".9">f</text></svg>
<svg class="ic" style="left:79.2px;top:597.0px" width="14" height="14" viewBox="0 0 14 14"><circle cx="7" cy="7" r="6.6" fill="#f4af3d" fill-opacity=".62"/><text x="5.65" y="11.3" text-anchor="middle" transform="scale(1.22,1)" font-family="Liberation Sans, sans-serif" font-size="10.5" fill="#4a3508" fill-opacity=".9">f</text></svg>
<svg class="ic" style="left:60.4px;top:258.0px" width="10" height="12" viewBox="0 0 10 12"><path d="M3,1.6 L7.4,6 L3,10.4" fill="none" stroke="#7a7a7a" stroke-width="1.3"/></svg>
<svg class="ic" style="left:60.4px;top:278.0px" width="10" height="12" viewBox="0 0 10 12"><path d="M3,1.6 L7.4,6 L3,10.4" fill="none" stroke="#7a7a7a" stroke-width="1.3"/></svg>
<svg class="ic" style="left:60.4px;top:298.0px" width="10" height="12" viewBox="0 0 10 12"><path d="M3,1.6 L7.4,6 L3,10.4" fill="none" stroke="#7a7a7a" stroke-width="1.3"/></svg>
<div id="hs2"></div>
</div>
<div id="wm">@稀土掘金技术社区</div>
</div></body></html>
